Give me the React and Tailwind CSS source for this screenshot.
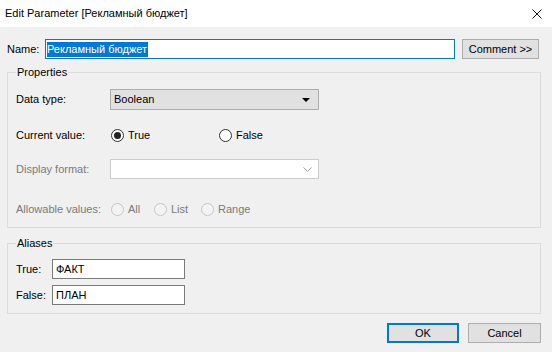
import React from "react";

const Radio = ({ checked, disabled, label, className = "" }) => (
  <div className={`flex items-center ${className}`}>
    <span
      className={`flex h-[13px] w-[13px] items-center justify-center rounded-full border ${
        disabled ? "border-[#c6c6c6] bg-[#f3f3f3]" : "border-[#333] bg-white"
      }`}
    >
      {checked && <span className="h-[7px] w-[7px] rounded-full bg-[#222]" />}
    </span>
    <span className={`ml-[4px] ${disabled ? "text-[#7a7a7a]" : "text-black"}`}>{label}</span>
  </div>
);

const Row = ({ label, disabled, className = "", children }) => (
  <div className={`flex items-center ${className}`}>
    <div className={`w-[94px] shrink-0 whitespace-nowrap ${disabled ? "text-[#7a7a7a]" : "text-black"}`}>{label}</div>
    {children}
  </div>
);

export default function App() {
  return (
    <div
      className="flex h-[352px] w-[552px] flex-col bg-[#f0f0f0] text-[11px] leading-[15px] text-black"
      style={{ fontFamily: '"Liberation Sans", Arial, sans-serif' }}
    >
      {/* title bar */}
      <div className="flex h-[27px] shrink-0 items-center justify-between bg-white pl-[5px] pr-[10px]">
        <span className="text-[11px]">Edit Parameter [Рекламный бюджет]</span>
        <svg width="10" height="10" viewBox="0 0 10 10" className="mt-[1px]">
          <path d="M0.5 0.5 L9.5 9.5 M9.5 0.5 L0.5 9.5" stroke="#111" strokeWidth="1" fill="none" />
        </svg>
      </div>

      <div className="flex flex-col pl-[7px] pr-[11px] pt-[12px]">
        {/* name row */}
        <div className="flex h-[20px] items-center">
          <div className="w-[38px] shrink-0">Name:</div>
          <div className="flex h-[20px] w-[410px] items-center border border-[#0078d7] bg-white pl-[1px]">
            <span className="bg-[#0078d7] pr-[1px] leading-[15px] text-white">Рекламный бюджет</span>
          </div>
          <button className="ml-[7px] flex h-[20px] w-[77px] items-center justify-center border border-[#adadad] bg-[#e1e1e1]">
            Comment &gt;&gt;
          </button>
        </div>

        {/* properties */}
        <fieldset className="mt-[5px] border border-[#dcdcdc] px-[8px] pb-[8px]">
          <legend className="px-[1px] leading-[16px]">Properties</legend>
          <Row label="Data type:" className="mt-[9px] h-[21px]">
            <div className="flex h-[21px] w-[209px] items-center justify-between border border-[#adadad] bg-[#e1e1e1] pl-[3px] pr-[8px]">
              <span>Boolean</span>
              <svg width="8" height="4" viewBox="0 0 8 4">
                <path d="M0 0 L8 0 L4 4 Z" fill="#000" />
              </svg>
            </div>
          </Row>
          <Row label="Current value:" className="mt-[15px] h-[20px]">
            <Radio checked label="True" className="ml-[1px] w-[108px]" />
            <Radio label="False" />
          </Row>
          <Row label="Display format:" disabled className="mt-[14px] h-[20px]">
            <div className="flex h-[20px] w-[209px] items-center justify-end border border-[#cccccc] bg-white pr-[6px]">
              <svg width="9" height="5" viewBox="0 0 9 5">
                <path d="M0.5 0.5 L4.5 4.5 L8.5 0.5" stroke="#a0a0a0" strokeWidth="1" fill="none" />
              </svg>
            </div>
          </Row>
          <Row label="Allowable values:" disabled className="mt-[20px] h-[20px]">
            <Radio disabled label="All" className="ml-[1px] w-[43px]" />
            <Radio disabled label="List" className="w-[47px]" />
            <Radio disabled label="Range" />
          </Row>
        </fieldset>

        {/* aliases */}
        <fieldset className="mt-[7px] border border-[#dcdcdc] px-[8px] pb-[8px]">
          <legend className="px-[1px] leading-[16px]">Aliases</legend>
          <div className="mt-[8px] flex h-[20px] items-center">
            <div className="w-[36px] shrink-0">True:</div>
            <div className="flex h-[20px] w-[133px] items-center border border-[#7a7a7a] bg-white pl-[3px]">ФАКТ</div>
          </div>
          <div className="mt-[6px] flex h-[20px] items-center">
            <div className="w-[36px] shrink-0">False:</div>
            <div className="flex h-[20px] w-[133px] items-center border border-[#7a7a7a] bg-white pl-[3px]">ПЛАН</div>
          </div>
        </fieldset>

        {/* buttons */}
        <div className="mt-[9px] flex justify-end gap-[9px]">
          <button className="flex h-[20px] w-[72px] items-center justify-center border-2 border-[#0078d7] bg-[#e1e1e1]">
            OK
          </button>
          <button className="flex h-[20px] w-[73px] items-center justify-center border border-[#adadad] bg-[#e1e1e1]">
            Cancel
          </button>
        </div>
      </div>
    </div>
  );
}
